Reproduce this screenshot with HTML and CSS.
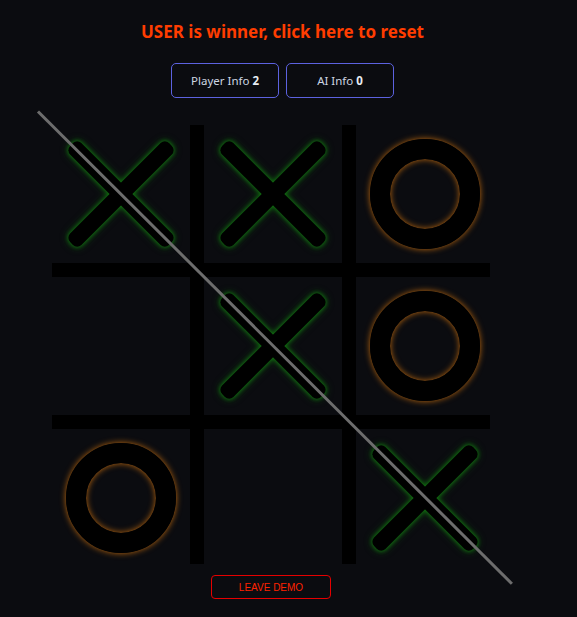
FILE: index.html
```html
<!DOCTYPE html>
<html lang="en">
<head>
<meta charset="utf-8">
<title>Tic Tac Toe</title>
<link rel="stylesheet" href="styles.css">
</head>
<body>
<div class="app">
  <h1 class="status">USER is winner, click here to reset</h1>
  <div class="scores">
    <button class="score">Player Info <b>2</b></button>
    <button class="score">AI Info <b>0</b></button>
  </div>
  <div class="board-wrap">
    <div class="board">
      <div class="cell"><svg class="x" viewBox="0 0 110 110"><rect x="-70" y="-8" width="140" height="16" rx="6" transform="translate(55 55) rotate(45)"/><rect x="-70" y="-8" width="140" height="16" rx="6" transform="translate(55 55) rotate(-45)"/></svg></div>
      <div class="cell"><svg class="x" viewBox="0 0 110 110"><rect x="-70" y="-8" width="140" height="16" rx="6" transform="translate(55 55) rotate(45)"/><rect x="-70" y="-8" width="140" height="16" rx="6" transform="translate(55 55) rotate(-45)"/></svg></div>
      <div class="cell"><div class="o"></div></div>
      <div class="cell"></div>
      <div class="cell"><svg class="x" viewBox="0 0 110 110"><rect x="-70" y="-8" width="140" height="16" rx="6" transform="translate(55 55) rotate(45)"/><rect x="-70" y="-8" width="140" height="16" rx="6" transform="translate(55 55) rotate(-45)"/></svg></div>
      <div class="cell"><div class="o"></div></div>
      <div class="cell"><div class="o"></div></div>
      <div class="cell"></div>
      <div class="cell"><svg class="x" viewBox="0 0 110 110"><rect x="-70" y="-8" width="140" height="16" rx="6" transform="translate(55 55) rotate(45)"/><rect x="-70" y="-8" width="140" height="16" rx="6" transform="translate(55 55) rotate(-45)"/></svg></div>
      <div class="win-line"></div>
    </div>
    <button class="leave">LEAVE DEMO</button>
  </div>
</div>
</body>
</html>
```

FILE: styles.css
```css
html, body {
  margin: 0;
  padding: 0;
  background: #0b0c10;
}
body {
  font-family: "Noto Sans", "Open Sans", sans-serif;
}
.app {
  width: 565px;
  padding-top: 19px;
}
.status {
  margin: 0;
  text-align: center;
  font-size: 17px;
  line-height: 26px;
  font-weight: 700;
  color: #ff3d00;
  cursor: pointer;
}
.scores {
  display: flex;
  justify-content: center;
  gap: 7px;
  margin-top: 18px;
}
.score {
  width: 108px;
  height: 35px;
  background: transparent;
  border: 1px solid #5c62e0;
  border-radius: 5px;
  color: #cdd6e2;
  font-family: "Noto Sans", "Open Sans", sans-serif;
  font-size: 11.5px;
  padding: 0;
}
.score b {
  color: #e8edf3;
}
.board-wrap {
  width: 438px;
  margin: 27px 0 0 52px;
  display: flex;
  flex-direction: column;
  align-items: center;
}
.board {
  position: relative;
  display: grid;
  grid-template-columns: 138px 138px 134px;
  grid-template-rows: 138px 138px 135px;
  gap: 14px;
  background: #000;
  width: 438px;
}
.cell {
  background: #0b0c10;
  padding: 14px 0 0 14px;
}
.x {
  display: block;
  width: 110px;
  height: 110px;
  overflow: visible;
  fill: #000;
  filter: drop-shadow(0 0 2px #137a13) drop-shadow(0 0 3px #0c4d0c);
}
.o {
  box-sizing: border-box;
  width: 110px;
  height: 110px;
  border-radius: 50%;
  border: 20px solid #000;
  box-shadow: 0 0 6px #c46c0e, inset 0 0 6px #c46c0e;
}
.win-line {
  position: absolute;
  left: -14px;
  top: -15.5px;
  width: 669px;
  height: 3px;
  background: #6d6d6d;
  transform-origin: 0 50%;
  transform: rotate(44.9deg);
}
.leave {
  margin-top: 11px;
  width: 120px;
  height: 24px;
  background: transparent;
  border: 1px solid #e60000;
  border-radius: 4px;
  color: #ff2200;
  font-family: "Liberation Sans", Arial, sans-serif;
  font-size: 10px;
  padding: 0;
}
```
